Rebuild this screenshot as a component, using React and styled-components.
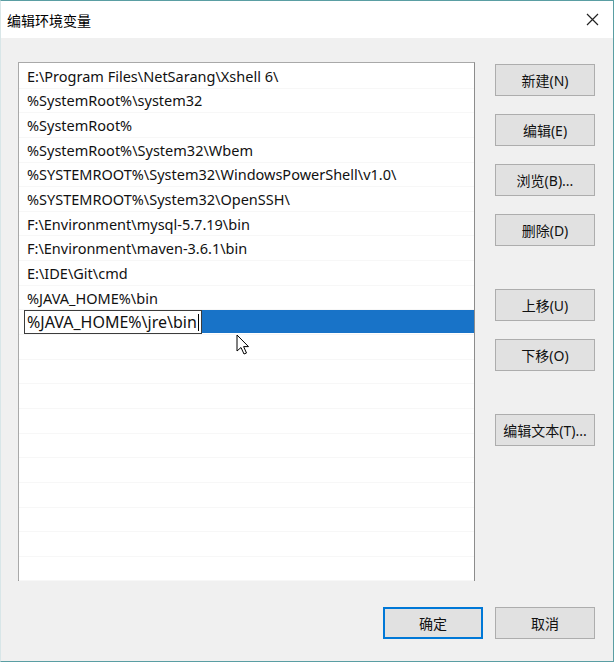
import styled, { createGlobalStyle } from 'styled-components';

const Global = createGlobalStyle`
  html, body {
    margin: 0;
    padding: 0;
    background: #f0f0f0;
  }
  * { box-sizing: border-box; }
`;

const paths = [
  'E:\\Program Files\\NetSarang\\Xshell 6\\',
  '%SystemRoot%\\system32',
  '%SystemRoot%',
  '%SystemRoot%\\System32\\Wbem',
  '%SYSTEMROOT%\\System32\\WindowsPowerShell\\v1.0\\',
  '%SYSTEMROOT%\\System32\\OpenSSH\\',
  'F:\\Environment\\mysql-5.7.19\\bin',
  'F:\\Environment\\maven-3.6.1\\bin',
  'E:\\IDE\\Git\\cmd',
  '%JAVA_HOME%\\bin',
];

const Window = styled.div`
  position: relative;
  width: 614px;
  height: 662px;
  border: 1px solid #5a9ea3;
  border-left-color: #d8e6e8;
  display: flex;
  flex-direction: column;
  font-family: "Noto Sans", "Noto Sans CJK SC", sans-serif;
  color: #000;
  overflow: hidden;
`;

const TitleBar = styled.div`
  height: 37px;
  background: #fff;
  display: flex;
  align-items: center;
  justify-content: space-between;
  padding: 0 14px 0 6px;
  font-size: 14px;
  font-family: "Noto Sans CJK SC", sans-serif;
`;

const Body = styled.div`
  flex: 1;
  background: #f0f0f0;
  padding: 24px 18px 0 17px;
  display: flex;
  flex-direction: column;
`;

const Main = styled.div`
  display: flex;
  gap: 20px;
  height: 519px;
`;

const List = styled.div`
  width: 457px;
  height: 100%;
  background: #fff;
  border: 1px solid #8c8c8c;
  border-top-color: #a9a9a9;
  border-left-color: #a9a9a9;
  padding-top: 1px;
  font-size: 14.5px;
  color: #111;
`;

const Row = styled.div`
  height: 24.65px;
  display: flex;
  align-items: center;
  padding-left: ${p => (p.$edit ? 5 : 8)}px;
  border-bottom: 1px solid #f7f7f7;
  white-space: nowrap;
`;

const EditBox = styled.div`
  height: 100%;
  display: flex;
  align-items: center;
  padding: 0 2px;
  border: 1px solid #3c3c3c;
  background: #fff;
  font-size: 16px;
`;

const Caret = styled.span`
  display: inline-block;
  width: 1px;
  height: 17px;
  background: #000;
  margin-left: 1px;
`;

const Selected = styled.div`
  flex: 1;
  height: calc(100% - 1px);
  align-self: flex-start;
  background: #1873c8;
`;

const Side = styled.div`
  width: 100px;
  display: flex;
  flex-direction: column;
  padding-top: 2px;
`;

const Button = styled.button`
  width: 100px;
  height: 32px;
  margin-top: ${p => p.$space || 0}px;
  background: #e1e1e1;
  border: 1px solid ${p => (p.$default ? '#0078d7' : '#adadad')};
  box-shadow: ${p => (p.$default ? 'inset 0 0 0 1px #0078d7' : 'none')};
  font-family: "Noto Sans", "Noto Sans CJK SC", sans-serif;
  font-size: 14px;
  color: #111;
  padding: 0;
`;

const Footer = styled.div`
  display: flex;
  justify-content: flex-end;
  gap: 12px;
  margin-top: 26px;
`;

const Pointer = styled.svg`
  position: absolute;
  left: 235px;
  top: 333px;
`;

export default function App() {
  return (
    <>
      <Global />
      <Window>
        <TitleBar>
          <span>编辑环境变量</span>
          <svg width="13" height="13" viewBox="0 0 13 13">
            <path d="M1 1L12 12M12 1L1 12" stroke="#222" strokeWidth="1.2" />
          </svg>
        </TitleBar>
        <Body>
          <Main>
            <List>
              {paths.map(p => (
                <Row key={p}>{p}</Row>
              ))}
              <Row $edit>
                <EditBox>
                  %JAVA_HOME%\jre\bin
                  <Caret />
                </EditBox>
                <Selected />
              </Row>
              {Array.from({ length: 10 }, (_, i) => (
                <Row key={'e' + i} />
              ))}
            </List>
            <Side>
              <Button>新建(N)</Button>
              <Button $space={18}>编辑(E)</Button>
              <Button $space={18}>浏览(B)...</Button>
              <Button $space={18}>删除(D)</Button>
              <Button $space={43}>上移(U)</Button>
              <Button $space={18}>下移(O)</Button>
              <Button $space={43}>编辑文本(T)...</Button>
            </Side>
          </Main>
          <Footer>
            <Button $default>确定</Button>
            <Button>取消</Button>
          </Footer>
        </Body>
        <Pointer width="14" height="22" viewBox="0 0 14 22">
          <path
            d="M1 1L1 17L5 13.5L8 20L10.5 19L7.6 12.6L12.5 12.6Z"
            fill="#fff"
            stroke="#000"
            strokeWidth="1"
            strokeLinejoin="round"
          />
        </Pointer>
      </Window>
    </>
  );
}
